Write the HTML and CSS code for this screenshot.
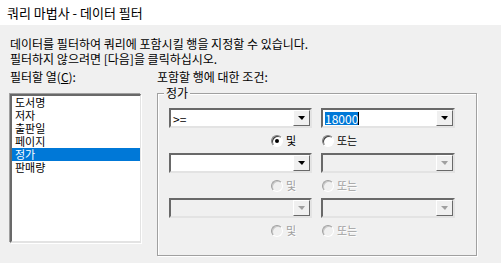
FILE: index.html
```
<!DOCTYPE html>
<html>
<head>
    <title>쿼리 마법사 - 데이터 필터</title>
    <link rel="stylesheet" href="styles.css">
</head>
<body>
    <div class="titlebar">쿼리 마법사 - 데이터 필터</div>
    <div class="intro">
        <div>데이터를 필터하여 쿼리에 포함시킬 행을 지정할 수 있습니다.</div>
        <div>필터하지 않으려면 [다음]을 클릭하십시오.</div>
    </div>
    <div class="columns">
        <div class="left">
            <div class="label">필터할 열(<u>C</u>):</div>
            <div class="listbox">
                <div class="item">도서명</div>
                <div class="item">저자</div>
                <div class="item">출판일</div>
                <div class="item">페이지</div>
                <div class="item selected">정가</div>
                <div class="item">판매량</div>
            </div>
        </div>
        <div class="right">
            <div class="label">포함할 행에 대한 조건:</div>
            <div class="group">
                <span class="legend">정가</span>

                <div class="combo-row">
                    <div class="combo wide"><span class="value">&gt;=</span><span class="drop"><i class="arrow"></i></span></div>
                    <div class="combo narrow"><span class="value"><span class="sel">18000</span><span class="caret"></span></span><span class="drop"><i class="arrow"></i></span></div>
                </div>
                <div class="radio-row">
                    <label class="radio and"><span class="circle checked"></span>및</label>
                    <label class="radio or"><span class="circle"></span>또는</label>
                </div>

                <div class="combo-row">
                    <div class="combo wide"><span class="value"></span><span class="drop"><i class="arrow"></i></span></div>
                    <div class="combo narrow disabled"><span class="value"></span><span class="drop"><i class="arrow"></i></span></div>
                </div>
                <div class="radio-row disabled">
                    <label class="radio and"><span class="circle"></span>및</label>
                    <label class="radio or"><span class="circle"></span>또는</label>
                </div>

                <div class="combo-row">
                    <div class="combo wide disabled"><span class="value"></span><span class="drop"><i class="arrow"></i></span></div>
                    <div class="combo narrow disabled"><span class="value"></span><span class="drop"><i class="arrow"></i></span></div>
                </div>
                <div class="radio-row disabled">
                    <label class="radio and"><span class="circle"></span>및</label>
                    <label class="radio or"><span class="circle"></span>또는</label>
                </div>
            </div>
        </div>
    </div>
</body>
</html>
```
FILE: styles.css
```
body {
    font-family: "Noto Sans CJK KR", "Liberation Sans", sans-serif;
    font-size: 11px;
    background: #f0f0f0;
    color: #000;
    margin: 0;
    padding: 0;
    width: 501px;
    height: 263px;
    overflow: hidden;
}
.titlebar {
    height: 25px;
    line-height: 25px;
    background: #fff;
    padding-left: 7px;
    font-size: 13px;
}
.intro {
    padding: 11px 0 0 10px;
    line-height: 15px;
    font-size: 12px;
}
.columns {
    display: flex;
    padding-left: 10px;
    margin-top: 3px;
}
.label {
    line-height: 15px;
    font-size: 12px;
    white-space: nowrap;
}
.left {
    width: 131px;
}
.listbox {
    margin-top: 10px;
    height: 145px;
    background: #fff;
    border-style: solid;
    border-width: 2px 1px 2px 2px;
    border-color: #696969 #e3e3e3 #e3e3e3 #696969;
    box-shadow: -1px -1px 0 #a0a0a0, 1px 1px 0 #fff;
}
.item {
    height: 13px;
    line-height: 13px;
    padding-left: 3px;
}
.item.selected {
    background: #0078d7;
    color: #fff;
}
.right {
    margin-left: 16px;
    width: 320px;
}
.group {
    position: relative;
    margin-top: 9px;
    height: 147px;
    border: 1px solid #a0a0a0;
    box-shadow: inset 1px 1px 0 #fff, 1px 1px 0 #fff;
    padding: 14px 0 0 11px;
}
.legend {
    position: absolute;
    top: -8px;
    left: 6px;
    padding: 0 2px;
    background: #f0f0f0;
    line-height: 14px;
    font-size: 12px;
}
.combo-row {
    display: flex;
    gap: 9px;
}
.combo {
    display: flex;
    height: 16px;
    background: #fff;
    border: 2px solid;
    border-color: #696969 #e3e3e3 #e3e3e3 #696969;
}
.combo.wide {
    width: 139px;
}
.combo.narrow {
    width: 130px;
}
.combo.disabled {
    background: #f0f0f0;
}
.value {
    flex: 1;
    display: flex;
    align-items: center;
    padding-left: 2px;
    line-height: 13px;
    font-size: 12px;
}
.sel {
    background: #0078d7;
    color: #fff;
    height: 13px;
    line-height: 13px;
}
.caret {
    width: 1px;
    height: 13px;
    background: #000;
}
.drop {
    width: 15px;
    height: 14px;
    background: #f0f0f0;
    border-style: solid;
    border-width: 1px;
    border-color: #fff #696969 #696969 #fff;
    display: flex;
    align-items: center;
    justify-content: center;
}
.arrow {
    width: 0;
    height: 0;
    border-left: 4px solid transparent;
    border-right: 3px solid transparent;
    border-top: 4px solid #000;
}
.disabled .arrow {
    border-top-color: #a0a0a0;
}
.radio-row {
    display: grid;
    grid-template-columns: 143px 134px;
    column-gap: 9px;
    height: 25px;
    align-items: center;
}
.radio {
    display: flex;
    align-items: center;
    gap: 3px;
    line-height: 13px;
}
.radio.and {
    justify-self: end;
    margin-right: 16px;
}
.radio.or {
    margin-left: 1px;
}
.circle {
    position: relative;
    box-sizing: border-box;
    width: 12px;
    height: 12px;
    border-radius: 50%;
    background: #fff;
    border: 1px solid;
    border-color: #808080 #fff #fff #808080;
    box-shadow: inset 1px 1px 0 #404040;
}
.circle.checked::after {
    content: "";
    position: absolute;
    left: 3px;
    top: 3px;
    width: 4px;
    height: 4px;
    border-radius: 50%;
    background: #000;
}
.radio-row.disabled .radio {
    color: #a0a0a0;
    text-shadow: 1px 1px 0 #fff;
}
.radio-row.disabled .circle {
    background: #f0f0f0;
    border-color: #a0a0a0 #fff #fff #a0a0a0;
    box-shadow: inset 1px 1px 0 #c8c8c8;
}
```
